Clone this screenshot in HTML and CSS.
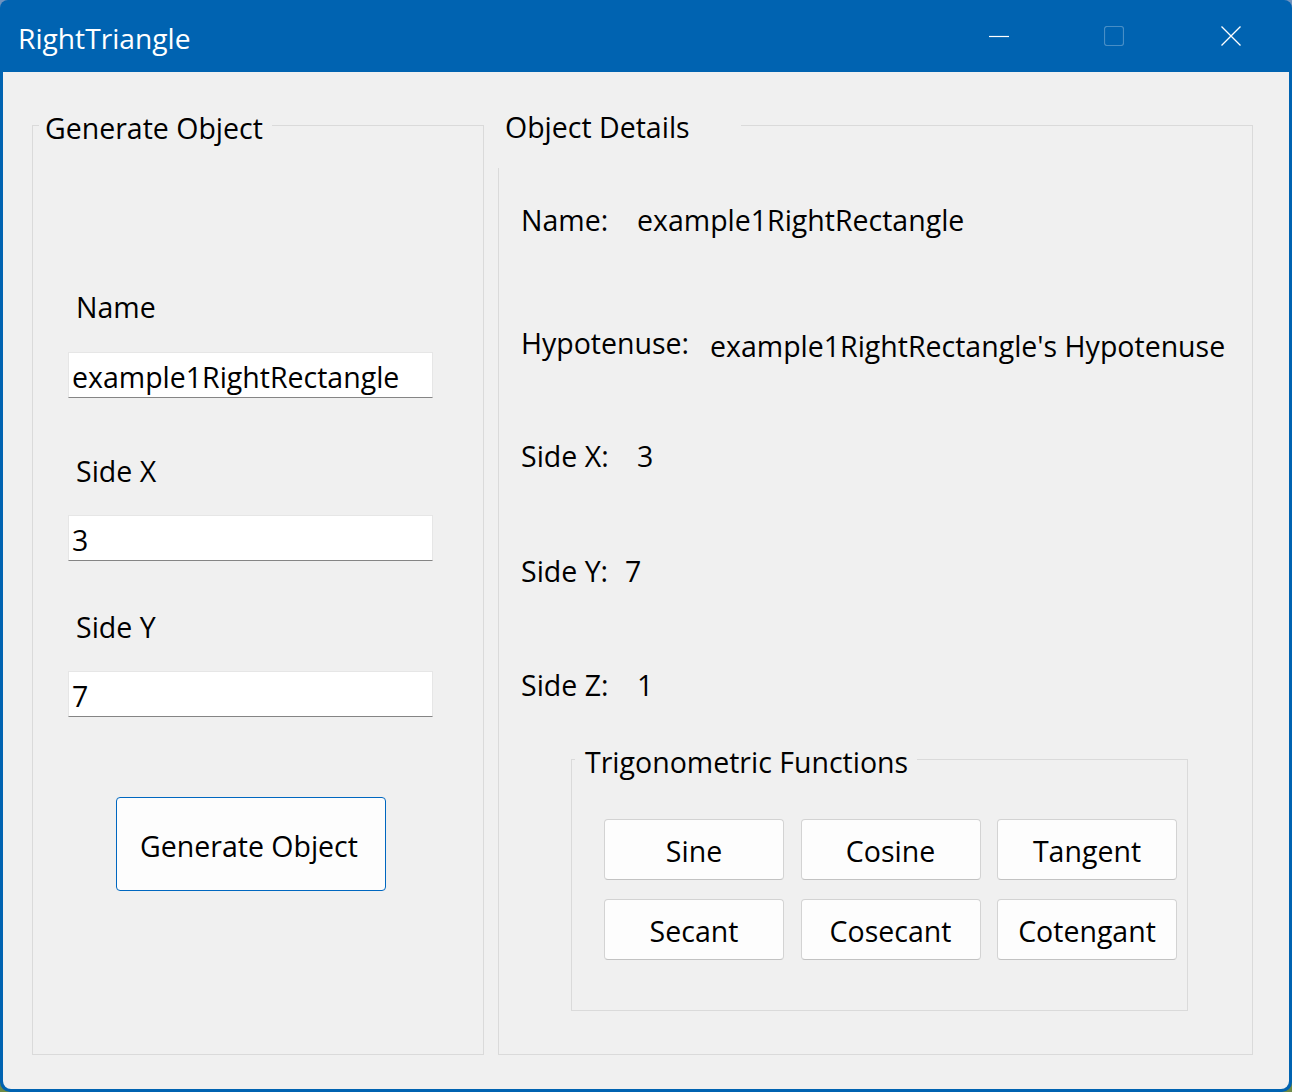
FILE: index.html
```html
<!DOCTYPE html>
<html lang="en">
<head>
<meta charset="utf-8">
<title>RightTriangle</title>
<link rel="stylesheet" href="styles.css">
</head>
<body>
<div class="window">
  <div class="titlebar">
    <span class="title">RightTriangle</span>
    <div class="caption-buttons">
      <svg class="cap cap-min" width="20" height="20" viewBox="0 0 20 20"><line x1="0" y1="10.5" x2="20" y2="10.5" stroke="#ffffff" stroke-width="1.2"/></svg>
      <svg class="cap cap-max" width="20" height="20" viewBox="0 0 20 20"><rect x="0.5" y="0.5" width="19" height="19" rx="2.5" fill="none" stroke="rgba(255,255,255,0.28)" stroke-width="1.2"/></svg>
      <svg class="cap cap-close" width="20" height="20" viewBox="0 0 20 20"><path d="M0.5 0.5 L19.5 19.5 M19.5 0.5 L0.5 19.5" stroke="#ffffff" stroke-width="1.3" fill="none"/></svg>
    </div>
  </div>
  <div class="client">
    <section class="group group-gen">
      <span class="group-title">Generate Object</span>
      <div class="field-label label-name">Name</div>
      <div class="textbox">example1RightRectangle</div>
      <div class="field-label label-x">Side X</div>
      <div class="textbox">3</div>
      <div class="field-label label-y">Side Y</div>
      <div class="textbox">7</div>
      <button class="btn-generate" type="button">Generate Object</button>
    </section>
    <section class="group group-details">
      <span class="group-title details-title">Object Details</span>
      <div class="detail-row row-name"><span class="key">Name:</span><span class="val">example1RightRectangle</span></div>
      <div class="detail-row row-hyp"><span class="key key-hyp">Hypotenuse:</span><span class="val val-hyp">example1RightRectangle's Hypotenuse</span></div>
      <div class="detail-row row-x"><span class="key">Side X:</span><span class="val">3</span></div>
      <div class="detail-row row-y"><span class="key key-y">Side Y:</span><span class="val">7</span></div>
      <div class="detail-row row-z"><span class="key">Side Z:</span><span class="val">1</span></div>
      <section class="group group-trig">
        <span class="group-title trig-title">Trigonometric Functions</span>
        <div class="trig-grid">
          <button class="btn-trig" type="button">Sine</button>
          <button class="btn-trig" type="button">Cosine</button>
          <button class="btn-trig" type="button">Tangent</button>
          <button class="btn-trig" type="button">Secant</button>
          <button class="btn-trig" type="button">Cosecant</button>
          <button class="btn-trig" type="button">Cotengant</button>
        </div>
      </section>
    </section>
  </div>
</div>
</body>
</html>
```
FILE: styles.css
```css
* { box-sizing: border-box; }

html, body {
  margin: 0;
  padding: 0;
}

body {
  width: 1292px;
  height: 1092px;
  overflow: hidden;
  background: linear-gradient(to bottom, #6f93bf 0, #6f93bf 50%, #6d8a45 50%, #6d8a45 100%);
  font-family: "Open Sans", "Noto Sans", "Liberation Sans", sans-serif;
  font-size: 28.5px;
  line-height: 36px;
  color: #000000;
}

.window {
  width: 1292px;
  height: 1092px;
  background: #0063b1;
  border-radius: 8px 8px 10px 10px;
  padding: 0 3px 3px 3px;
  display: flex;
  flex-direction: column;
}

.titlebar {
  height: 72px;
  flex: none;
  display: flex;
  align-items: center;
  color: #ffffff;
}

.title {
  margin-left: 15px;
  padding-top: 3px;
  font-size: 28.2px;
}

.caption-buttons {
  margin-left: auto;
  margin-right: 48px;
  display: flex;
  align-items: center;
}

.cap { display: block; }
.cap-max { margin-left: 95px; }
.cap-close { margin-left: 97px; }

.client {
  flex: 1;
  background: #f0f0f0;
  border-radius: 0 0 8px 8px;
  display: flex;
  align-items: flex-start;
  gap: 14px;
  padding: 53px 0 0 29px;
}

.group {
  position: relative;
  border: 1px solid #dadada;
}

.group-title {
  position: absolute;
  top: -16px;
  left: 6px;
  padding: 0 9px 0 6px;
  background: #f0f0f0;
  white-space: nowrap;
}

/* Generate Object group */
.group-gen {
  width: 452px;
  height: 930px;
  display: flex;
  flex-direction: column;
  align-items: flex-start;
}

.field-label {
  margin-left: 43px;
}
.label-name { margin-top: 163px; }
.label-x { margin-top: 55px; }
.label-y { margin-top: 48px; }

.textbox {
  margin-top: 26px;
  margin-left: 35px;
  width: 365px;
  height: 46px;
  background: #ffffff;
  border: 1px solid #e6e6e6;
  border-bottom: 1px solid #858585;
  padding: 6px 0 0 3px;
  white-space: nowrap;
}
.label-name + .textbox { margin-top: 27px; }

.btn-generate {
  margin-top: 80px;
  margin-left: 83px;
  width: 270px;
  height: 94px;
  background: #fdfdfd;
  border: 1px solid #0067c0;
  border-radius: 4px;
  font: inherit;
  color: #000000;
  padding: 4px 4px 0 0;
}

/* Object Details group */
.group-details {
  width: 755px;
  height: 930px;
  display: flex;
  flex-direction: column;
  align-items: flex-start;
}

.details-title {
  left: -1px;
  top: -27px;
  width: 243px;
  height: 69px;
  padding: 10px 0 0 7px;
}

.detail-row {
  display: flex;
  align-items: flex-start;
  padding-left: 22px;
  white-space: nowrap;
}
.key { width: 116px; flex: none; }
.key-hyp { width: 189px; }
.key-y { width: 104px; }
.val-hyp { padding-top: 3px; }

.row-name { margin-top: 76px; }
.row-hyp { margin-top: 87px; }
.row-x { margin-top: 74px; }
.row-y { margin-top: 79px; }
.row-z { margin-top: 78px; }

/* Trigonometric group */
.group-trig {
  margin-top: 56px;
  margin-left: 72px;
  width: 617px;
  height: 252px;
}

.trig-title {
  left: 3px;
  top: -16px;
  padding: 0 9px 0 10px;
}

.trig-grid {
  margin: 59px 0 0 32px;
  display: grid;
  grid-template-columns: 180px 180px 180px;
  grid-auto-rows: 61px;
  column-gap: 16.5px;
  row-gap: 19px;
}

.btn-trig {
  background: #fdfdfd;
  border: 1px solid #d3d3d3;
  border-bottom-color: #c2c2c2;
  border-radius: 4px;
  font: inherit;
  color: #000000;
  padding: 2px 0 0 0;
}
```
